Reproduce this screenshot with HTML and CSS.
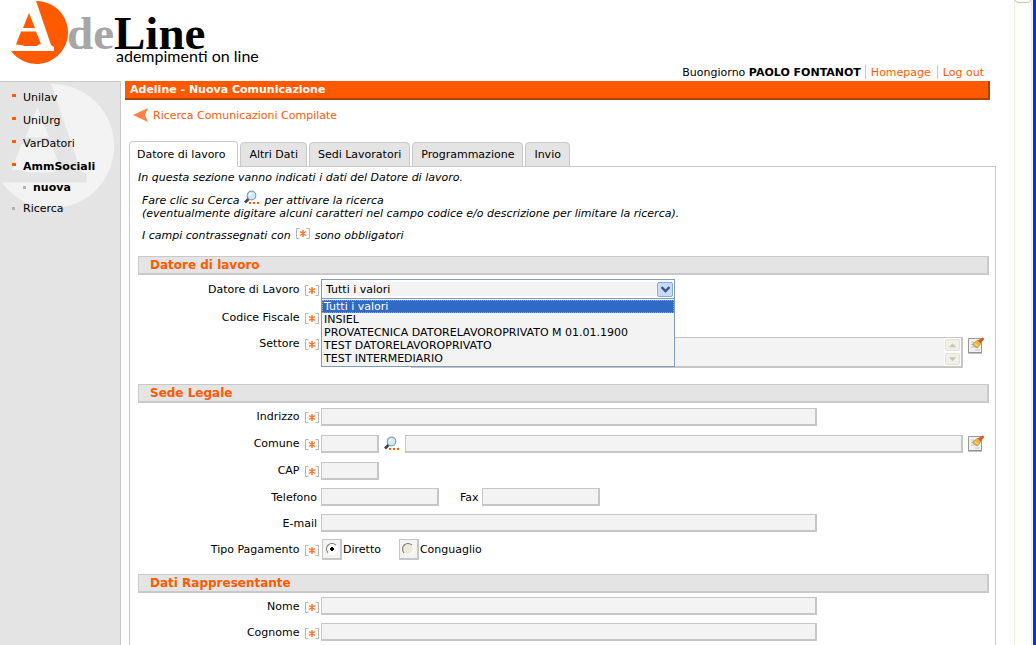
FILE: index.html
```html
<!DOCTYPE html>
<html lang="it">
<head>
<meta charset="utf-8">
<title>Adeline - Nuova Comunicazione</title>
<link rel="stylesheet" href="styles.css">
</head>
<body>
<svg class="defs" aria-hidden="true">
  <symbol id="mark" viewBox="0 0 60 66">
    <path d="M25 1A31.500 31.500 0 1 1 0 51H43V47L40 45Z"/>
    <path d="M18 13 24 28H12Z"/>
    <path d="M10 31.500H25L30 44Q27 44.500 26 46H13Q11 44.500 5 44.500Z"/>
  </symbol>
  <symbol id="lens" viewBox="0 0 18 16">
    <path d="M2 12.500 6 8.500" stroke="#3f4654" stroke-width="2.6"/>
    <circle cx="8.500" cy="5.500" r="4.300" fill="#cdebfa" stroke="#8d9fb3" stroke-width="1.2"/>
    <path d="M6.500 5.500a2 2 0 0 1 2-2" stroke="#fff" stroke-width="1.4" fill="none"/>
    <path d="M6 12h2v2H6zM10 12h2v2h-2zM14 12h2v2h-2z" fill="#ff5a00"/>
  </symbol>
  <symbol id="star" viewBox="0 0 14 13">
    <path d="M3.500 1.500H.500v10h3M10.500 1.500h3v10h-3" fill="none" stroke="#b5b5b5"/>
    <path d="M7 3v7M4 4.500l6 4M10 4.500l-6 4" stroke="#ff7526" stroke-width="1.5"/>
  </symbol>
  <symbol id="clean" viewBox="0 0 18 17">
    <path d="M1.500 1.500h13v14h-13z" fill="#f1f1f1" stroke="#9a9a9a"/>
    <path d="M1 16h14" stroke="#888"/>
    <path d="M4 5h3M4 7.500h3M4 10h7M8 13h5" stroke="#c4c4c4"/>
    <path d="M6 6.500 11 3l3 3.500L10.500 11 6 8.500z" fill="#e9b93f" stroke="#b58320" stroke-width=".6"/>
    <path d="M8 6.500l2.500 2.500" stroke="#fff0b0"/>
    <path d="M10.500 3.500 16 .300l1.300 2L13.500 6.500z" fill="#d2602c"/>
  </symbol>
</svg>
<div class="window">
  <div class="page">
    <header class="header">
      <div class="logo">
        <svg class="logo-mark" aria-hidden="true"><use href="#mark"/></svg>
        <div class="logo-text">
          <span class="logo-name"><span class="logo-grey">de</span>Line</span>
          <span class="logo-sub">adempimenti on line</span>
        </div>
      </div>
      <div class="user">
        <span class="hello">Buongiorno <b>PAOLO FONTANOT</b></span>
        <a href="#">Homepage</a>
        <a href="#">Log out</a>
      </div>
    </header>
    <div class="columns">
      <nav class="sidebar">
        <svg class="watermark" aria-hidden="true"><use href="#mark"/></svg>
        <ul class="menu">
          <li><a href="#">Unilav</a></li>
          <li><a href="#">UniUrg</a></li>
          <li><a href="#">VarDatori</a></li>
          <li class="current"><a href="#">AmmSociali</a></li>
          <li class="sub current"><a href="#">nuova</a></li>
          <li class="grey"><a href="#">Ricerca</a></li>
        </ul>
      </nav>
      <main class="main">
        <h1 class="title">Adeline - Nuova Comunicazione</h1>
        <a class="back" href="#"><svg width="15" height="14" viewBox="0 0 15 14" aria-hidden="true"><path d="M0 7 15 0 12 7 15 14z" fill="#ff8244"/></svg>Ricerca Comunicazioni Compilate</a>
        <div class="tabs">
          <button type="button" class="tab active">Datore di lavoro</button>
          <button type="button" class="tab">Altri Dati</button>
          <button type="button" class="tab">Sedi Lavoratori</button>
          <button type="button" class="tab">Programmazione</button>
          <button type="button" class="tab">Invio</button>
        </div>
        <form class="panel">
          <div class="intro">
            <p>In questa sezione vanno indicati i dati del Datore di lavoro.</p>
            <p class="inset">Fare clic su Cerca <svg class="lens"><use href="#lens"/></svg> per attivare la ricerca<br>(eventualmente digitare alcuni caratteri nel campo codice e/o descrizione per limitare la ricerca).</p>
            <p class="inset">I campi contrassegnati con <svg class="star"><use href="#star"/></svg> sono obbligatori</p>
          </div>

          <h2>Datore di lavoro</h2>
          <div class="row tall">
            <label for="datore">Datore di Lavoro <svg class="star"><use href="#star"/></svg></label>
            <div class="fields">
              <div class="combo">
                <select id="datore"><option>Tutti i valori</option></select>
                <span class="combo-arrow"><svg width="9" height="7" viewBox="0 0 9 7" aria-hidden="true"><path d="M.5 1 4.500 5 8.500 1" fill="none" stroke="#3f5580" stroke-width="2.400"/></svg></span>
                <ul class="options">
                  <li class="selected">Tutti i valori</li>
                  <li>INSIEL</li>
                  <li>PROVATECNICA DATORELAVOROPRIVATO M 01.01.1900</li>
                  <li>TEST DATORELAVOROPRIVATO</li>
                  <li>TEST INTERMEDIARIO</li>
                </ul>
              </div>
            </div>
          </div>
          <div class="row tall">
            <label for="cf">Codice Fiscale <svg class="star"><use href="#star"/></svg></label>
            <div class="fields"><input id="cf" class="medium" type="text"></div>
          </div>
          <div class="row top">
            <label for="settore">Settore <svg class="star"><use href="#star"/></svg></label>
            <div class="fields">
              <input id="settore" class="code" type="text">
              <div class="area">
                <textarea aria-label="Descrizione settore" rows="2"></textarea>
                <span class="area-scroll" aria-hidden="true">
                  <svg viewBox="0 0 13 11"><path d="M2.500 8 6.500 3.500 10.500 8z" fill="#c6c5b8"/></svg>
                  <svg viewBox="0 0 13 11"><path d="M2.500 3.500 6.500 8 10.500 3.500z" fill="#c6c5b8"/></svg>
                </span>
              </div>
              <button type="button" class="icon" aria-label="Pulisci settore"><svg width="18" height="17"><use href="#clean"/></svg></button>
            </div>
          </div>

          <h2>Sede Legale</h2>
          <div class="row">
            <label for="indirizzo">Indrizzo <svg class="star"><use href="#star"/></svg></label>
            <div class="fields"><input id="indirizzo" class="long" type="text"></div>
          </div>
          <div class="row">
            <label for="comune">Comune <svg class="star"><use href="#star"/></svg></label>
            <div class="fields">
              <input id="comune" class="code" type="text">
              <button type="button" class="icon" aria-label="Cerca comune"><svg class="lens"><use href="#lens"/></svg></button>
              <input class="grow" type="text" aria-label="Descrizione comune">
              <button type="button" class="icon" aria-label="Pulisci comune"><svg width="18" height="17"><use href="#clean"/></svg></button>
            </div>
          </div>
          <div class="row">
            <label for="cap">CAP <svg class="star"><use href="#star"/></svg></label>
            <div class="fields"><input id="cap" class="code" type="text"></div>
          </div>
          <div class="row tight">
            <label for="tel" class="plain">Telefono</label>
            <div class="fields">
              <input id="tel" class="phone" type="text">
              <label for="fax" class="fax">Fax</label>
              <input id="fax" class="phone" type="text">
            </div>
          </div>
          <div class="row tight">
            <label for="mail" class="plain">E-mail</label>
            <div class="fields"><input id="mail" class="long" type="text"></div>
          </div>
          <div class="row tight">
            <span class="label">Tipo Pagamento <svg class="star"><use href="#star"/></svg></span>
            <div class="fields choices">
              <label class="choice"><span class="radio"><input type="radio" name="pag" checked></span>Diretto</label>
              <label class="choice"><span class="radio"><input type="radio" name="pag"></span>Conguaglio</label>
            </div>
          </div>

          <h2>Dati Rappresentante</h2>
          <div class="row tight">
            <label for="nome">Nome <svg class="star"><use href="#star"/></svg></label>
            <div class="fields"><input id="nome" class="long" type="text"></div>
          </div>
          <div class="row tight">
            <label for="cognome">Cognome <svg class="star"><use href="#star"/></svg></label>
            <div class="fields"><input id="cognome" class="long" type="text"></div>
          </div>
        </form>
      </main>
    </div>
  </div>
  <div class="scrollbar"><span class="thumb"></span></div>
  <div class="edge"></div>
</div>
</body>
</html>
```
FILE: styles.css
```css
* { box-sizing: border-box; }

body {
  margin: 0;
  font: 11px/13px Verdana, "DejaVu Sans", sans-serif;
  color: #000;
  background: #fff;
}

a { color: #ff5a00; text-decoration: none; }
button, input, select, textarea { font: inherit; margin: 0; }
.defs { display: none; }

.window {
  display: grid;
  grid-template-columns: 1fr 18px 4px;
  height: 100vh;
  overflow: hidden;
}

.page { display: flex; flex-direction: column; min-width: 0; }

/* Header */
.header {
  display: flex;
  justify-content: space-between;
  align-items: flex-end;
  height: 81px;
  flex: none;
  padding: 0 24px 0 11px;
}
.logo { display: flex; align-self: flex-start; }
.logo-mark { width: 60px; height: 66px; fill: #ff5a00; }
.logo-text { display: flex; flex-direction: column; padding-top: 13px; }
.logo-name {
  font: bold 47px/40px "Liberation Serif", serif;
  margin-left: -4px;
}
.logo-grey { color: #a6a6a6; }
.logo-sub {
  font: 16px/16px Lato, sans-serif;
  margin: -5px 0 0 45px;
}
.user { display: flex; align-items: center; padding-bottom: 2px; }
.user a { border-left: 1px solid #c6c6c6; padding: 1px 6px 0 5px; }
.hello { padding-right: 4px; }

/* Sidebar */
.columns { display: flex; flex: 1; min-height: 0; }
.sidebar {
  position: relative;
  flex: none;
  width: 121px;
  background: #e4e4e4;
  border: 1px solid #c9c9c9;
  border-width: 1px 1px 0 0;
}
.watermark { position: absolute; left: 1px; top: 0; width: 120px; height: 130px; fill: #f3f3f3; }
.menu { position: relative; list-style: none; margin: 0; padding: 4px 0 0 12px; }
.menu li { display: flex; align-items: center; height: 23px; }
.menu li::before { content: ""; width: 4px; height: 3px; margin: 0 7px 4px 0; background: #ff5a00; }
.menu a { color: #000; }
.menu .current { font-weight: bold; }
.menu .sub { height: 19px; padding-left: 11px; }
.menu .sub::before, .menu .grey::before { width: 3px; margin-bottom: 0; background: #b3b3b3; }
.menu .grey::before { margin-right: 8px; }

/* Main column */
.main {
  display: flex;
  flex-direction: column;
  flex: 1;
  min-width: 0;
  padding: 0 18px 0 4px;
}
.title {
  margin: 0 6px 0 0;
  padding: 2px 5px;
  font-size: 11px;
  line-height: 13px;
  color: #fff;
  background: #ff5a00;
  border: solid #b33f00;
  border-width: 0 2px 2px 0;
}
.back { display: flex; align-items: center; gap: 5px; margin: 8px 8px 0; height: 14px; }
.tabs { display: flex; align-items: flex-end; gap: 2px; margin: 19px 0 -1px 4px; position: relative; }
.tab {
  height: 25px;
  padding: 0 8px;
  background: #e4e4e4;
  border: 1px solid #c9c9c9;
  border-radius: 4px 4px 0 0;
  color: #000;
}
.tab.active { height: 26px; padding: 0 12px 0 7px; background: #fff; border-bottom-color: #fff; }

.panel {
  flex: 1 0 auto;
  margin-left: 4px;
  padding: 4px 6px 0 8px;
  border: 1px solid #c9c9c9;
  border-bottom: 0;
}
.intro { font-style: italic; }
.intro p { margin: 0 0 9px; }
.intro .inset { margin-left: 4px; }
.intro p:first-child { margin-bottom: 10px; }
.intro p:last-child { margin-bottom: 14px; }

h2 {
  margin: 12px 0 0;
  padding: 1px 11px;
  font-size: 12px;
  line-height: 14px;
  color: #ff5a00;
  background: #e4e4e4;
  border: solid #c9c9c9;
  border-width: 1px 2px 2px 1px;
}

.lens { width: 18px; height: 16px; }
.star { width: 14px; height: 13px; margin: -2px 1px -2px 2px; vertical-align: -2px; }
.intro .lens { margin: -7px 0 -2px; vertical-align: 0; }
.intro .star { vertical-align: 1px; }

/* Form rows */
.row {
  display: grid;
  grid-template-columns: 182px 1fr;
  column-gap: 1px;
  align-items: center;
  height: 27px;
}
.row.tall { height: 28px; }
.row.tight { height: 26px; }
.row.top, .row.top .fields { align-items: start; }
.row.top { height: auto; padding: 6px 0 4px; }
.row > label, .row > .label { text-align: right; }
.row > .plain { padding-right: 3px; }
.fields { display: flex; align-items: center; min-width: 0; }

input[type="text"], .area {
  height: 18px;
  padding: 0 2px;
  background: #f3f3f3;
  border: solid #c6c6c6;
  border-width: 1px 2px 2px 1px;
}
.code { width: 58px; }
.phone { width: 118px; }
.medium { width: 200px; }
.long { width: 496px; }
.grow { flex: 1; min-width: 0; }
.fax { margin: 0 3px 0 21px; }

.icon { display: flex; padding: 0; margin: 0 4px; border: 0; background: none; }

.combo { position: relative; width: 354px; height: 20px; }
.combo select {
  appearance: none;
  display: block;
  width: 100%;
  height: 20px;
  padding: 1px 4px 0;
  color: #000;
  background: #f3f3f3;
  border: 1px solid #7f9db9;
  border-radius: 0;
  box-shadow: inset 0 0 0 2px #fff;
}
.combo-arrow {
  position: absolute;
  top: 3px;
  right: 2px;
  display: grid;
  place-items: center;
  width: 16px;
  height: 15px;
  background: #c5dcfb;
  border: 1px solid #8aa5e0;
  border-radius: 2px;
  box-shadow: 0 0 0 1px #fff;
  pointer-events: none;
}
.options {
  position: absolute;
  z-index: 1;
  top: 19px;
  left: 0;
  width: 100%;
  margin: 0;
  padding: 1px 0;
  list-style: none;
  background: #f3f3f3;
  border: 1px solid #7f9db9;
}
.options li { padding: 0 2px; }
.options .selected { color: #fff; background: #316ac5; outline: 1px dotted #d09a4a; outline-offset: -1px; }

.area { display: flex; flex: 1; height: 31px; margin-left: 32px; padding: 0; }
.area textarea { flex: 1; min-width: 0; padding: 0; border: 0; resize: none; background: none; overflow: hidden; }
.area-scroll { display: flex; flex-direction: column; width: 17px; background: #fdfdf9; }
.area-scroll svg { flex: 1; min-height: 0; margin: 1px; background: #f1f0e8; border: 1px solid #e2e1d6; border-radius: 2px; }

.choices { gap: 18px; padding-left: 1px; }
.choice { display: flex; align-items: center; gap: 1px; }
.radio {
  display: grid;
  place-items: center;
  width: 20px;
  height: 21px;
  background: #f3f3f3;
  border: solid #c6c6c6;
  border-width: 1px 2px 2px 1px;
}
.radio input {
  appearance: none;
  width: 12px;
  height: 12px;
  border: 1px solid;
  border-color: #77756a #fff #fff #77756a;
  border-radius: 50%;
  background: #ece9d8;
}
.radio input:checked { background: radial-gradient(#000 0 2px, #fff 2px); }

/* Window frame */
.scrollbar { background: #fefefa; border: solid #edece4; border-width: 0 1px; }
.thumb { display: block; height: 8px; border: 1px solid #c9c7b4; border-radius: 0 0 3px 3px; margin-top: -5px; }
.edge { border-left: 1px solid #f5f4ee; background: #0336d9; }
```
